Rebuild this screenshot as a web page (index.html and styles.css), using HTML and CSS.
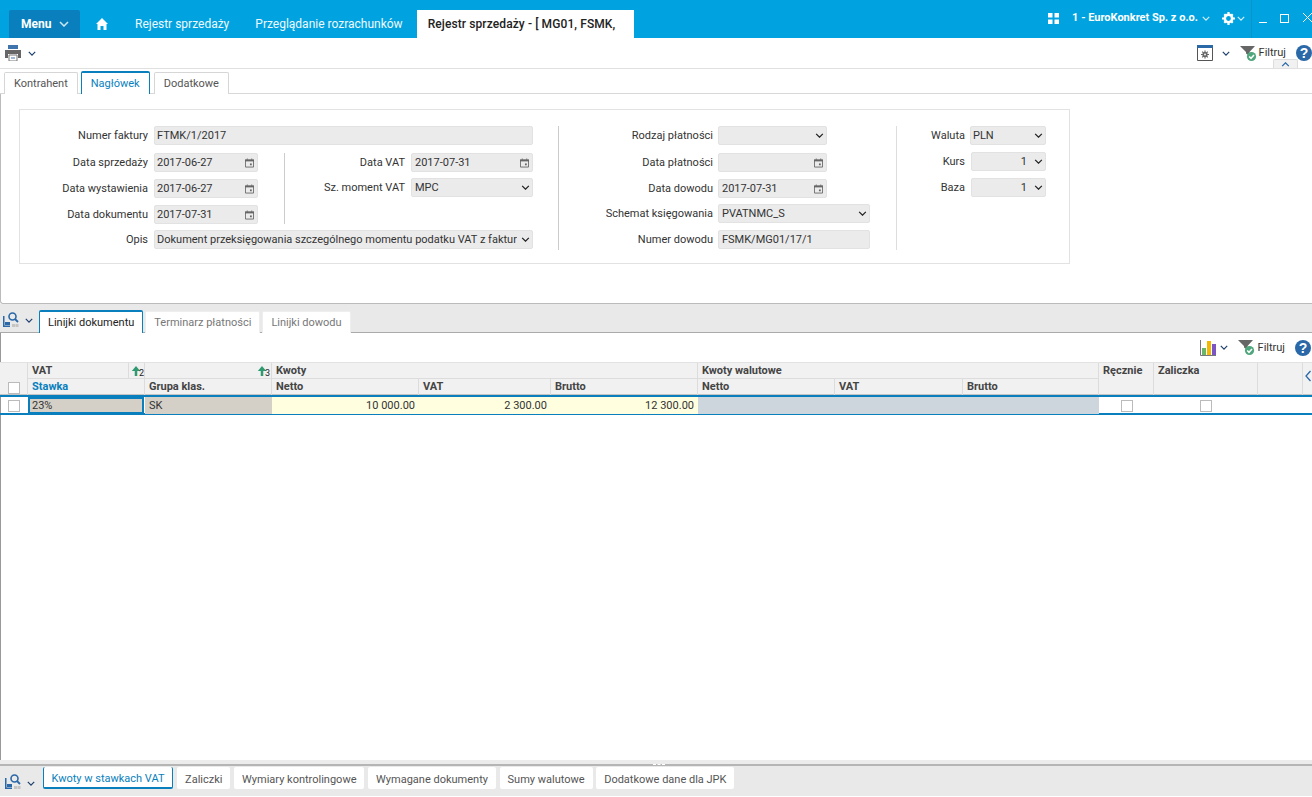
FILE: index.html
```html
<!DOCTYPE html>
<html lang="pl">
<head>
<meta charset="utf-8">
<title>Rejestr sprzedaży</title>
<link rel="stylesheet" href="styles.css">
</head>
<body>
<svg class="defs" width="0" height="0" aria-hidden="true">
  <defs>
    <symbol id="chev" viewBox="0 0 10 6"><path d="M1 1l4 4 4-4" fill="none" stroke="currentColor" stroke-width="1.5"/></symbol>
    <symbol id="cal" viewBox="0 0 10 10"><path d="M0.500 2h9v7.500h-9z" fill="none" stroke="#666" stroke-width="1"/><path d="M0 1h10v2.200H0z" fill="#666"/><path d="M2 0h1v1.500H2zM7 0h1v1.500H7z" fill="#666"/><path d="M5.500 5.500h2v2h-2z" fill="#666"/></symbol>
    <symbol id="sortup" viewBox="0 0 12 14"><path d="M6 1L1 7h3.500v6h3V7H11z" fill="#2f9a72"/></symbol>
    <symbol id="filter" viewBox="0 0 17 17"><path d="M0 1h15L9.500 7v4L6 8.500V7z" fill="#666"/><circle cx="11.500" cy="11.500" r="4.600" fill="#4fa67c"/><path d="M9.200 11.500l1.800 1.800 3-3.200" fill="none" stroke="#fff" stroke-width="1.500"/></symbol>
    <symbol id="help" viewBox="0 0 16 16"><circle cx="8" cy="8" r="8" fill="#2a68a8"/><text x="8" y="13" text-anchor="middle" font-family="Liberation Sans, sans-serif" font-size="14" font-weight="700" fill="#fff">?</text></symbol>
    <symbol id="lookup" viewBox="0 0 16 16"><path d="M0 4h1.500v9.500H7V15H0z" fill="#2a68a8"/><path d="M2 10h5v3H2z" fill="#2a68a8"/><path d="M9 12h3v3H9zM12.500 12h3v3h-3z" fill="#c4c4c4"/><circle cx="9.500" cy="4.500" r="3.500" fill="none" stroke="#2a68a8" stroke-width="1.600"/><path d="M12 7l3 3" stroke="#2a68a8" stroke-width="1.800"/></symbol>
  </defs>
</svg>

<header class="topbar">
  <div class="menu-btn">Menu <svg class="chev-w"><use href="#chev"/></svg></div>
  <svg class="home" viewBox="0 0 12 12"><path d="M6 0L0 6h1.500v6h3V8h3v4h3V6H12z" fill="#fff"/></svg>
  <div class="top-tab">Rejestr sprzedaży</div>
  <div class="top-tab">Przeglądanie rozrachunków</div>
  <div class="top-tab-active">Rejestr sprzedaży - [ MG01, FSMK,</div>
  <div class="top-right">
    <svg class="apps" viewBox="0 0 11 11"><path d="M0 0h4.500v4.500H0zM6.500 0H11v4.500H6.500zM0 6.500h4.500V11H0zM6.500 6.500H11V11H6.500z" fill="#fff"/></svg>
    <span class="company">1 - EuroKonkret Sp. z o.o.</span>
    <svg class="chev-thin"><use href="#chev"/></svg>
    <svg class="gear" viewBox="0 0 12 12"><circle cx="6" cy="6" r="3.400" fill="none" stroke="#fff" stroke-width="2.400"/><path d="M5 0h2v2H5zM5 10h2v2H5zM0 5h2v2H0zM10 5h2v2h-2zM1.400 2.800l1.400-1.400 1.200 1.200-1.400 1.400zM8 9.400l1.400-1.400 1.200 1.200-1.400 1.400zM9.200 1.400l1.400 1.400-1.200 1.200L8 2.600zM2.600 8L4 9.400l-1.200 1.200-1.400-1.400z" fill="#fff"/></svg>
    <svg class="chev-thin gear-chev"><use href="#chev"/></svg>
    <div class="win-sep"></div>
    <div class="win-ctl"><span class="win-min"></span><span class="win-max"></span><svg class="win-close" viewBox="0 0 10 10"><path d="M1 0l9 9M10 0L1 9" stroke="#fff" stroke-width="1"/></svg></div>
  </div>
</header>

<div class="toolbar">
  <svg class="printer" viewBox="0 0 16 16"><path d="M3 0h10v4H3z" fill="#3f74ad"/><path d="M0 5h16v8h-3V9H3v4H0z" fill="#666"/><path d="M4 10h8v6H4z" fill="#fff" stroke="#777"/><path d="M6 13h4" stroke="#3f74ad"/></svg>
  <svg class="chev-d"><use href="#chev"/></svg>
  <div class="spacer"></div>
  <svg class="calset" viewBox="0 0 16 16"><path d="M.500.500h15v15H.500z" fill="#fff" stroke="#555"/><path d="M0 0h16v3H0z" fill="#2a68a8"/><circle cx="8" cy="9.500" r="2.600" fill="#666"/><path d="M8 5.500v8M4 9.500h8M5.200 6.700l5.600 5.600M10.800 6.700l-5.600 5.600" stroke="#666" stroke-width="1.200"/><circle cx="8" cy="9.500" r=".9" fill="#fff"/></svg>
  <svg class="chev-d chev-gap"><use href="#chev"/></svg>
  <svg class="filter-ic"><use href="#filter"/></svg>
  <span class="filter-txt">Filtruj</span>
  <svg class="help-ic"><use href="#help"/></svg>
  <div class="collapse"><svg class="collapse-ic"><use href="#chev"/></svg></div>
</div>

<nav class="tabs-top">
  <div class="tab tab-t">Kontrahent</div>
  <div class="tab tab-t tab-active">Nagłówek</div>
  <div class="tab tab-t">Dodatkowe</div>
</nav>

<section class="panel">
  <div class="form-box">
    <div class="fcol fcol-a">
      <div class="frow"><label class="lbl lbl-a">Numer faktury</label><div class="field f-full">FTMK/1/2017</div></div>
      <div class="split">
        <div class="split-l">
          <div class="frow"><label class="lbl lbl-a">Data sprzedaży</label><div class="field f-date">2017-06-27<svg class="cal"><use href="#cal"/></svg></div></div>
          <div class="frow"><label class="lbl lbl-a">Data wystawienia</label><div class="field f-date">2017-06-27<svg class="cal"><use href="#cal"/></svg></div></div>
          <div class="frow"><label class="lbl lbl-a">Data dokumentu</label><div class="field f-date">2017-07-31<svg class="cal"><use href="#cal"/></svg></div></div>
        </div>
        <div class="split-r">
          <div class="frow"><label class="lbl lbl-b">Data VAT</label><div class="field f-date2">2017-07-31<svg class="cal"><use href="#cal"/></svg></div></div>
          <div class="frow"><label class="lbl lbl-b">Sz. moment VAT</label><div class="field f-date2">MPC<svg class="sel"><use href="#chev"/></svg></div></div>
        </div>
      </div>
      <div class="frow"><label class="lbl lbl-a">Opis</label><div class="field f-full"><span class="clip">Dokument przeksięgowania szczególnego momentu podatku VAT z faktury</span><svg class="sel"><use href="#chev"/></svg></div></div>
    </div>
    <div class="fcol fcol-b">
      <div class="frow"><label class="lbl lbl-c">Rodzaj płatności</label><div class="field f-pay"><svg class="sel"><use href="#chev"/></svg></div></div>
      <div class="frow"><label class="lbl lbl-c">Data płatności</label><div class="field f-pay"><svg class="cal"><use href="#cal"/></svg></div></div>
      <div class="frow"><label class="lbl lbl-c">Data dowodu</label><div class="field f-pay">2017-07-31<svg class="cal"><use href="#cal"/></svg></div></div>
      <div class="frow"><label class="lbl lbl-c">Schemat księgowania</label><div class="field f-sch">PVATNMC_S<svg class="sel"><use href="#chev"/></svg></div></div>
      <div class="frow"><label class="lbl lbl-c">Numer dowodu</label><div class="field f-sch">FSMK/MG01/17/1</div></div>
    </div>
    <div class="fcol fcol-c">
      <div class="frow"><label class="lbl lbl-d">Waluta</label><div class="field f-cur">PLN<svg class="sel"><use href="#chev"/></svg></div></div>
      <div class="frow"><label class="lbl lbl-d">Kurs</label><div class="field f-cur f-num">1<svg class="sel sel-n"><use href="#chev"/></svg></div></div>
      <div class="frow"><label class="lbl lbl-d">Baza</label><div class="field f-cur f-num">1<svg class="sel sel-n"><use href="#chev"/></svg></div></div>
    </div>
  </div>
</section>

<div class="strip strip-mid">
  <svg class="lookup"><use href="#lookup"/></svg>
  <svg class="chev-d chev-s"><use href="#chev"/></svg>
  <div class="tab tab-t tab-white">Linijki dokumentu</div>
  <div class="tab tab-dim">Terminarz płatności</div>
  <div class="tab tab-dim">Linijki dowodu</div>
</div>

<main class="gridarea">
  <div class="grid-tools">
    <svg class="chart" viewBox="0 0 16 16"><path d="M.500 0v15.500H16" fill="none" stroke="#777"/><path d="M2 8h4v7H2z" fill="#6ab56a"/><path d="M7 1h4v14H7z" fill="#f5b800"/><path d="M12 4h4v11h-4z" fill="#7b55c4"/></svg>
    <svg class="chev-d"><use href="#chev"/></svg>
    <svg class="filter-ic filter-g"><use href="#filter"/></svg>
    <span class="filter-txt">Filtruj</span>
    <svg class="help-ic"><use href="#help"/></svg>
  </div>
  <div class="ghead">
    <div class="gh gh-chk"><span class="chk"></span></div>
    <div class="gh gh-vat">VAT<span class="sortbox"><svg class="sort"><use href="#sortup"/></svg><i class="sortn">2</i></span></div>
    <div class="gh gh-blank"><span class="sortbox sortbox-2"><svg class="sort"><use href="#sortup"/></svg><i class="sortn">3</i></span></div>
    <div class="gh gh-kw">Kwoty</div>
    <div class="gh gh-kwv">Kwoty walutowe</div>
    <div class="gh gh-rec">Ręcznie</div>
    <div class="gh gh-zal">Zaliczka</div>
    <div class="gh gh-end"></div>
    <div class="gh gh-arr"><svg class="arrow" viewBox="0 0 6 12"><path d="M5.500 1L1 6l4.500 5" fill="none" stroke="#2a68a8" stroke-width="1.300"/></svg></div>
    <div class="gh sub gh-st">Stawka</div>
    <div class="gh sub">Grupa klas.</div>
    <div class="gh sub">Netto</div>
    <div class="gh sub">VAT</div>
    <div class="gh sub">Brutto</div>
    <div class="gh sub">Netto</div>
    <div class="gh sub">VAT</div>
    <div class="gh sub">Brutto</div>
  </div>
  <div class="grow">
    <div class="gc gc-chk"><span class="chk"></span></div>
    <div class="gc gc-sel">23%</div>
    <div class="gc gc-grey">SK</div>
    <div class="gc gc-y">10 000.00</div>
    <div class="gc gc-y">2 300.00</div>
    <div class="gc gc-y">12 300.00</div>
    <div class="gc gc-b"></div>
    <div class="gc gc-b"></div>
    <div class="gc gc-b"></div>
    <div class="gc gc-mid"><span class="chk"></span></div>
    <div class="gc gc-mid"><span class="chk"></span></div>
    <div class="gc"></div>
    <div class="gc"></div>
  </div>
</main>

<div class="splitter"><span class="grip"></span></div>
<div class="strip strip-bot">
  <svg class="lookup"><use href="#lookup"/></svg>
  <svg class="chev-d chev-s"><use href="#chev"/></svg>
  <div class="tab tab-b tab-active">Kwoty w stawkach VAT</div>
  <div class="tab tab-b">Zaliczki</div>
  <div class="tab tab-b">Wymiary kontrolingowe</div>
  <div class="tab tab-b">Wymagane dokumenty</div>
  <div class="tab tab-b">Sumy walutowe</div>
  <div class="tab tab-b">Dodatkowe dane dla JPK</div>
</div>
</body>
</html>
```
FILE: styles.css
```css
* { box-sizing: border-box; }
html, body { margin: 0; height: 100%; }
body {
  width: 1312px; height: 797px; overflow: hidden;
  display: flex; flex-direction: column;
  font: 11px/1.2 Roboto, "Liberation Sans", sans-serif;
  color: #333; background: #fff;
}
.defs { position: absolute; }
svg { display: block; flex: none; }

/* top bar */
.topbar { height: 38px; flex: none; background: #00a3e0; display: flex; align-items: flex-end; color: #fff; }
.menu-btn { width: 71px; height: 28px; margin-left: 9px; background: #0a7fbd; border-radius: 2px 2px 0 0; display: flex; align-items: center; padding-left: 12px; font-weight: 700; font-size: 12px; gap: 8px; }
.chev-w { width: 10px; height: 6px; color: #cfe8f5; }
.home { width: 12px; height: 12px; margin: 0 0 8px 16px; }
.top-tab { height: 28px; display: flex; align-items: center; margin-left: 27px; font-size: 12px; color: #eef8fd; }
.top-tab + .top-tab { margin-left: 26px; }
.top-tab-active { width: 217px; height: 28px; margin-left: 14px; padding-left: 11px; background: #fff; color: #222; display: flex; align-items: center; font-size: 12px; font-weight: 500; letter-spacing: .1px; white-space: nowrap; overflow: hidden; }
.top-right { margin-left: auto; height: 38px; display: flex; align-items: center; }
.apps { width: 11px; height: 11px; margin-right: 13px; margin-top: -2px; }
.company { font-weight: 700; font-size: 11px; margin-top: -2px; }
.chev-thin { width: 8px; height: 5px; color: #d5eef9; margin: -1px 0 0 4px; }
.gear { width: 13px; height: 13px; margin: -2px 0 0 12px; }
.gear-chev { margin-left: 2px; }
.win-sep { width: 1px; height: 38px; background: #0c93c9; margin-left: 6px; }
.win-ctl { width: 60px; display: flex; align-items: center; padding-left: 7px; gap: 13px; margin-top: -2px; }
.win-min { width: 9px; height: 1px; background: #fff; margin-top: 8px; }
.win-max { width: 9px; height: 9px; border: 1px solid #fff; }
.win-close { width: 10px; height: 10px; }

/* toolbar */
.toolbar { position: relative; height: 31px; flex: none; border-bottom: 1px solid #e0e0e0; display: flex; align-items: center; padding: 0 0 0 5px; }
.printer { width: 16px; height: 16px; }
.chev-d { width: 8px; height: 5px; color: #1d3f6e; }
.toolbar .chev-d { margin-left: 7px; }
.spacer { flex: 1; }
.calset { width: 16px; height: 16px; margin-right: 4px; }
.toolbar .chev-gap { margin: 0 10px 0 5px; }
.filter-ic { width: 17px; height: 17px; }
.filter-txt { margin-left: 2px; color: #333; }
.help-ic { width: 16px; height: 16px; margin-left: 10px; }
.collapse { position: absolute; left: 1273px; top: 21px; width: 25px; height: 9px; background: #f1f1f1; border: 1px solid #ddd; border-bottom: 0; border-radius: 2px 2px 0 0; display: flex; justify-content: center; padding-top: 2px; }
.collapse-ic { width: 9px; height: 5px; color: #2a68a8; transform: scaleY(-1); }

/* tabs */
.tabs-top { height: 25px; flex: none; display: flex; align-items: flex-end; padding-left: 4px; gap: 3px; border-bottom: 1px solid #d8d8d8; }
.tabs-top .tab:last-child { margin-left: 1px; }
.tab { height: 22px; display: flex; align-items: center; padding: 0 9px; background: #fff; color: #555; border: 1px solid #d6d6d6; border-bottom: 0; border-radius: 2px 2px 0 0; white-space: nowrap; }
.tab-t { margin-bottom: -1px; }
.tab-active { color: #0a7fbd; }
.tab-t.tab-active { border-color: #0a7fbd; height: 23px; border-top-width: 2px; }
.tab-white { color: #222; border-color: #0a7fbd; border-top-width: 2px; height: 23px; padding: 0 8px; }
.tab-dim { border-color: #eee; color: #777; margin-bottom: -1px; padding: 0 8px; }

/* header form panel */
.panel { height: 210px; flex: none; padding: 15px 0 0 18px; border-left: 1px solid #bbb; border-bottom: 1px solid #bbb; border-radius: 0 0 0 3px; }
.form-box { width: 1051px; height: 155px; border: 1px solid #e2e2e2; padding-top: 16px; display: flex; }
.fcol { display: flex; flex-direction: column; }
.fcol-a { width: 538px; gap: 7px; flex: none; }
.fcol-b { width: 338px; height: 124px; border-left: 1px solid #ccc; display: grid; grid-template-rows: 27px 26px 25px 26px 19px; }
.fcol-c { height: 124px; border-left: 1px solid #ddd; gap: 7px; }
.frow { display: flex; align-items: center; height: 19px; }
.lbl { text-align: right; flex: none; color: #333; white-space: nowrap; margin-right: 5px; }
.lbl-a { width: 128px; margin-right: 6px; }
.lbl-b { width: 120px; margin-right: 6px; }
.lbl-c { width: 154px; }
.lbl-d { width: 68px; }
.field { height: 19px; flex: none; background: #ebebeb; border: 1px solid #e2e2e2; border-radius: 2px; padding: 0 3px; display: flex; align-items: center; position: relative; white-space: nowrap; color: #333; }
.f-full { width: 379px; padding-left: 2px; }
.f-date { width: 104px; padding-left: 2px; }
.f-date2 { width: 122px; }
.f-pay { width: 109px; }
.f-sch { width: 152px; }
.f-cur { width: 76px; padding-left: 2px; }
.f-num { width: 75px; margin-left: 1px; justify-content: flex-end; padding-right: 18px; }
.cal { width: 9px; height: 10px; margin-left: auto; }
.sel { width: 9px; height: 5px; color: #222; margin-left: auto; margin-right: -1px; }
.sel-n { position: absolute; right: 2px; margin: 0; }
.clip { width: 360px; overflow: hidden; }
.split { display: flex; margin: 1px 0 -1px; }
.split-l { width: 265px; display: flex; flex-direction: column; gap: 7px; border-right: 1px solid #ccc; }
.split-r { display: flex; flex-direction: column; gap: 6px; }

/* strips */
.strip { flex: none; background: #e9e9e9; display: flex; }
.strip-mid { height: 29px; align-items: flex-end; gap: 2px; border-bottom: 1px solid #aaa; padding-left: 3px; }
.lookup { width: 16px; height: 16px; margin-bottom: 4px; }
.chev-s { margin: 0 4px 9px 4px; }

/* grid */
.gridarea { flex: 1; border-left: 1px solid #999; min-height: 0; }
.grid-tools { height: 29px; display: flex; align-items: center; justify-content: flex-end; padding-right: 1px; }
.chart { width: 16px; height: 16px; }
.grid-tools .chev-d { margin: 0 10px 0 4px; }
.grid-tools .filter-txt { margin-left: 3px; }
.filter-g { margin-right: 0; }
.ghead { display: grid; margin-left: -1px; height: 33px; grid-template-columns: 28px 117px 127px 147px 132px 147px 137px 128px 136px 55px 104px 45px 9px; grid-template-rows: 16px 16px; background: #f1f1f1; border-top: 1px solid #e2e2e2; border-bottom: 1px solid #c4c4c4; font-weight: 700; color: #444; }
.gh { padding: 1px 0 0 4px; border-right: 1px solid #dcdcdc; border-bottom: 1px solid #dcdcdc; position: relative; white-space: nowrap; }
.gh-chk { grid-column: 1; grid-row: 1 / span 2; display: flex; align-items: flex-end; justify-content: center; padding: 0 0 1px; border-bottom: 0; }
.gh-kw { grid-column: span 3; }
.gh-kwv { grid-column: span 3; }
.gh-rec, .gh-zal, .gh-end, .gh-arr { grid-row: 1 / span 2; border-bottom: 0; }
.gh-rec { grid-column: 10; }
.gh-zal { grid-column: 11; }
.gh-end { grid-column: 12; }
.gh-arr { grid-column: 13; border-right: 0; padding: 0; }
.gh-st { color: #0a7fbd; }
.sub { border-bottom: 0; }
.sortbox { position: absolute; right: 0; top: 0; width: 16px; height: 15px; border-left: 1px solid #dcdcdc; }
.sortbox-2 { border-left: 0; }
.sort { position: absolute; left: 2px; top: 2px; width: 10px; height: 12px; }
.sortn { position: absolute; left: 10px; top: 6px; font-size: 9px; font-style: normal; font-weight: 400; line-height: 9px; color: #222; }
.arrow { position: absolute; left: 2px; top: 7px; width: 6px; height: 12px; }
.chk { display: block; width: 12px; height: 12px; border: 1px solid #bbb; background: #fff; }
.grow { display: grid; margin-left: -1px; height: 20px; grid-template-columns: 28px 117px 127px 147px 132px 147px 137px 128px 136px 55px 104px 45px 9px; border-top: 2px solid #0a7fbd; border-bottom: 2px solid #0a7fbd; }
.gc { display: flex; align-items: center; padding: 0 4px; white-space: nowrap; color: #333; }
.gc-chk, .gc-mid { justify-content: center; }
.gc-sel { background: #d4d0c8; border: 2px solid #0a7fbd; margin: 0 1px 0 0; padding-left: 2px; }
.gc-grey { background: #d4d0c8; }
.gc-y { background: #ffffe0; justify-content: flex-end; }
.gc-b { background: #cdd6dc; }

/* bottom */
.splitter { flex: none; height: 6px; background: #ececec; border-bottom: 2px solid #b5b5b5; position: relative; }
.grip { position: absolute; left: 653px; top: 4px; width: 12px; height: 1px; border-top: 1px dashed #fff; }
.strip-bot { height: 30px; margin-bottom: 1px; padding: 1px 0 0 3px; gap: 3.6px; }
.strip-bot .lookup { margin: 7px 0 0 2px; }
.strip-bot .chev-s { margin: 14px 4px 0 2.4px; }
.tab-b { height: 22px; border: 0; border-radius: 2px; color: #555; padding: 3px 8px 0; }
.tab-b.tab-active { border-bottom: 2px solid #0a7fbd; color: #0a7fbd; border-left: 1px solid #0a7fbd; border-right: 1px solid #0a7fbd; padding-top: 4px; }
```
